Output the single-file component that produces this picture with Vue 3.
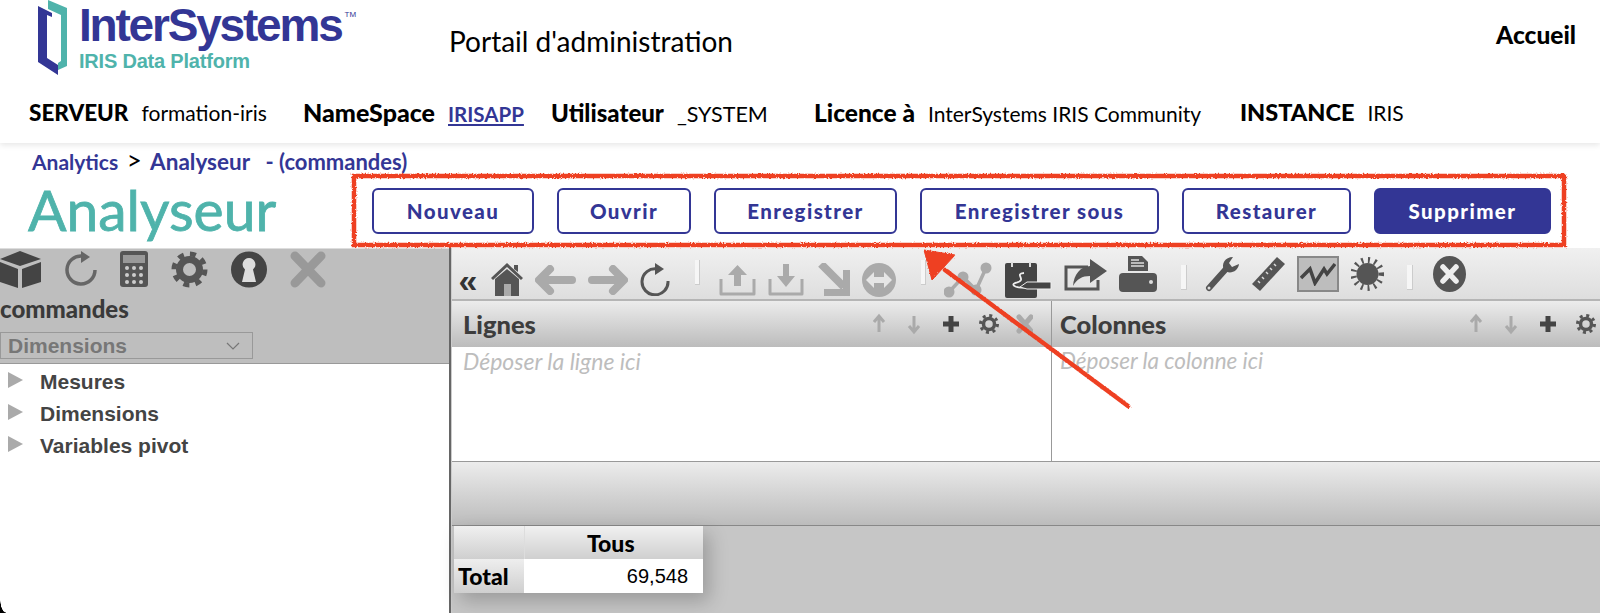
<script setup>
const info = [
  { label: 'SERVEUR', value: 'formation-iris', cls: 'srv' },
  { label: 'NameSpace', value: 'IRISAPP', link: true, cls: 'ns' },
  { label: 'Utilisateur', value: '_SYSTEM', cls: 'usr' },
  { label: 'Licence à', value: 'InterSystems IRIS Community', cls: 'lic' },
  { label: 'INSTANCE', value: 'IRIS', cls: 'inst' }
]
const buttons = [
  { text: 'Nouveau', cls: 'b-new' },
  { text: 'Ouvrir', cls: 'b-open' },
  { text: 'Enregistrer', cls: 'b-save' },
  { text: 'Enregistrer sous', cls: 'b-saveas' },
  { text: 'Restaurer', cls: 'b-restore' },
  { text: 'Supprimer', cls: 'b-delete' }
]
const tree = ['Mesures', 'Dimensions', 'Variables pivot']
</script>

<template>
  <div class="page">
    <header class="top">
      <div class="brand-row">
        <div class="logo">
          <svg width="31" height="76" viewBox="0 0 31 76">
            <path d="M0 6 L14 13 V17 L9 15 V58 L20 65 V75 L0 62 Z" fill="#333695" />
            <path d="M10 0 L29 8 V66 L20 70 V63 L23 61 V15 L10 9 Z" fill="#4fb3ab" />
          </svg>
          <div class="logo-text">
            <div class="logo-name">InterSystems<sup>TM</sup></div>
            <div class="logo-sub">IRIS Data Platform</div>
          </div>
        </div>
        <div class="portal">Portail d'administration</div>
        <a class="home">Accueil</a>
      </div>
      <div class="info-row">
        <div v-for="item in info" :key="item.label" :class="['info', item.cls]">
          <b>{{ item.label }}</b>
          <a v-if="item.link">{{ item.value }}</a>
          <span v-else>{{ item.value }}</span>
        </div>
      </div>
    </header>

    <section class="title-bar">
      <div class="crumbs">
        <b>Analytics</b> <i>&gt;</i> <b class="crumb-page">Analyseur</b> <b class="crumb-end">- (commandes)</b>
      </div>
      <div class="title-row">
        <h1>Analyseur</h1>
        <div class="actions">
          <button v-for="b in buttons" :key="b.text" :class="['btn', b.cls]">{{ b.text }}</button>
        </div>
      </div>
    </section>

    <main class="workspace">
      <aside class="side">
        <div class="side-head">
          <div class="side-tools">
            <svg width="41" height="37" viewBox="0 0 41 37">
              <path d="M20 0 L41 8 L20 15 L0 8 Z" fill="#444" />
              <path d="M0 11 L18 18 V37 L0 31 Z M41 11 L22 18 V37 L41 31 Z" fill="#444" />
            </svg>
            <svg width="33" height="36" viewBox="0 0 33 36" fill="none">
              <path d="M18 5 A14 14 0 1 0 31 19" stroke="#666" stroke-width="3.5" />
              <path d="M17 0 L26 6 L17 12 Z" fill="#666" />
            </svg>
            <svg width="28" height="36" viewBox="0 0 28 36">
              <rect width="28" height="36" rx="3" fill="#555" />
              <rect x="3" y="4" width="22" height="8" fill="#999" />
              <g fill="#ccc">
                <circle cx="7" cy="17" r="2" /><circle cx="14" cy="17" r="2" /><circle cx="21" cy="17" r="2" />
                <circle cx="7" cy="24" r="2" /><circle cx="14" cy="24" r="2" /><circle cx="21" cy="24" r="2" />
                <circle cx="7" cy="31" r="2" /><circle cx="14" cy="31" r="2" /><circle cx="21" cy="31" r="2" />
              </g>
            </svg>
            <svg width="37" height="37" viewBox="0 0 37 37" fill="none">
              <circle cx="18.5" cy="18.5" r="10" stroke="#555" stroke-width="7" />
              <circle cx="18.5" cy="18.5" r="15.500" stroke="#555" stroke-width="5" stroke-dasharray="6 6.170" />
            </svg>
            <svg width="36" height="37" viewBox="0 0 36 37">
              <circle cx="18" cy="18.5" r="18" fill="#444" />
              <path d="M18 7 A6.5 6.5 0 0 1 22 18.5 L25 31 H11 L14 18.5 A6.5 6.5 0 0 1 18 7 Z" fill="#ddd" />
            </svg>
            <svg width="36" height="37" viewBox="0 0 36 37">
              <path d="M5 5 L31 32 M31 5 L5 32" stroke="#999" stroke-width="9" stroke-linecap="round" />
            </svg>
          </div>
          <div class="cube-name">commandes</div>
          <div class="side-select">
            <span>Dimensions</span>
            <svg width="14" height="8" viewBox="0 0 14 8" fill="none"><path d="M1 1 L7 7 L13 1" stroke="#777" stroke-width="1.2" /></svg>
          </div>
        </div>
        <ul class="tree">
          <li v-for="t in tree" :key="t"><i class="tri"></i>{{ t }}</li>
        </ul>
      </aside>

      <div class="pivot">
        <div class="pivot-tools">
          <span class="chev low">«</span>
          <svg class="low" width="32" height="33" viewBox="0 0 32 33">
            <path d="M16 0 L32 15 L30 17 L16 4 L2 17 L0 15 Z M23 2 H27 V9 L23 6 Z" fill="#555" />
            <path d="M4 16 L16 6 L28 16 V33 H4 Z" fill="#555" />
            <rect x="13" y="21" width="7" height="12" fill="#aaa" />
          </svg>
          <svg class="low" width="41" height="30" viewBox="0 0 41 30">
            <path d="M15 4 L4 15 L15 26 M5 15 H37" fill="none" stroke="#aaa" stroke-width="8" stroke-linecap="round" stroke-linejoin="round" />
          </svg>
          <svg class="low" width="40" height="30" viewBox="0 0 40 30">
            <path d="M25 4 L36 15 L25 26 M35 15 H4" fill="none" stroke="#aaa" stroke-width="8" stroke-linecap="round" stroke-linejoin="round" />
          </svg>
          <svg class="low" width="30" height="33" viewBox="0 0 30 33" fill="none">
            <path d="M17 6 A13 13 0 1 0 28 18" stroke="#555" stroke-width="3" />
            <path d="M15 0 L24 6 L15 12 Z" fill="#555" />
          </svg>
          <i class="sep s1"></i>
          <svg class="low" width="37" height="33" viewBox="0 0 37 33" fill="none">
            <path d="M2 16 V31 H35 V16" stroke="#aaa" stroke-width="3" stroke-linejoin="round" />
            <path d="M18.500 2 L28 12 H22 V23 H15 V12 H9 Z" fill="#aaa" />
          </svg>
          <svg class="low" width="36" height="33" viewBox="0 0 36 33" fill="none">
            <path d="M2 16 V31 H34 V16" stroke="#aaa" stroke-width="3" stroke-linejoin="round" />
            <path d="M18 24 L27 13 H21 V1 H15 V13 H9 Z" fill="#aaa" />
          </svg>
          <svg class="low" width="34" height="33" viewBox="0 0 34 33">
            <path d="M5 1 L28 24 M31 7 V30 H8" fill="none" stroke="#aaa" stroke-width="8" />
          </svg>
          <svg class="low" width="34" height="34" viewBox="0 0 34 34">
            <circle cx="17" cy="17" r="17" fill="#aaa" />
            <path d="M12 9 L4 17 L12 25 V20 H22 V25 L30 17 L22 9 V14 H12 Z" fill="#e6e6e6" />
          </svg>
          <i class="sep s2"></i>
          <svg class="low" width="49" height="36" viewBox="0 0 49 36" fill="none">
            <path d="M5 30 L19 15 L32 28 L42 6" stroke="#aaa" stroke-width="3.500" />
            <circle cx="5" cy="30" r="5.500" fill="#aaa" /><circle cx="19" cy="15" r="5.500" fill="#aaa" />
            <circle cx="32" cy="28" r="5.500" fill="#aaa" /><circle cx="42" cy="6" r="5.500" fill="#aaa" />
          </svg>
          <svg class="low" width="47" height="36" viewBox="0 0 47 36" fill="none">
            <rect x="0" y="1" width="32" height="35" rx="2" fill="#444" />
            <path d="M7 0 V5 M25 0 V5" stroke="#ddd" stroke-width="2" />
            <path d="M19 11 C8 12 24 18 10 21 C5 23 12 27 22 25" stroke="#eee" stroke-width="1.800" />
            <path d="M15 25 L22 20 H46 V27 H22 Z" fill="#444" stroke="#eee" stroke-width="1" />
          </svg>
          <svg width="43" height="33" viewBox="0 0 43 33" fill="none">
            <path d="M24 9 H2 V31 H34 V22" stroke="#555" stroke-width="3" />
            <path d="M26 1 L43 13 L26 25 V18 C18 18 13 21 9 28 C10 16 16 9 26 8 Z" fill="#555" />
          </svg>
          <svg width="38" height="36" viewBox="0 0 38 36">
            <path d="M9 0 H23 L29 6 V15 H9 Z" fill="#555" />
            <path d="M12 4 H20 M12 7 H25 M12 10 H25" stroke="#ddd" stroke-width="1.500" />
            <rect y="17" width="38" height="19" rx="4" fill="#555" />
            <circle cx="32" cy="26" r="2" fill="#ddd" />
          </svg>
          <i class="sep s3"></i>
          <svg width="35" height="36" viewBox="0 0 35 36" fill="none">
            <path d="M4 32 L21 13" stroke="#555" stroke-width="6" stroke-linecap="round" />
            <path d="M28 1 C20 1 16 8 19 14 C24 19 33 16 34 8 L27 11 L24 7 Z" fill="#555" />
            <circle cx="4" cy="32" r="1.500" fill="#ddd" />
          </svg>
          <svg width="33" height="36" viewBox="0 0 33 36">
            <path d="M25 1 L33 8 L8 35 L0 28 Z" fill="#555" />
            <path d="M22 8 L24 10 M18 12 L20 14 M14 16 L16 18 M10 21 L12 23 M6 25 L8 27" stroke="#ddd" stroke-width="1.500" />
          </svg>
          <span class="chart-toggle">
            <svg width="36" height="24" viewBox="0 0 36 24" fill="none">
              <path d="M1 16 L10 7 L15 21 L24 7 L27 12 L35 2" stroke="#444" stroke-width="3.500" />
            </svg>
          </span>
          <svg width="33" height="36" viewBox="0 0 33 36" fill="none">
            <circle cx="16.500" cy="18" r="11" fill="#555" />
            <circle cx="16.500" cy="18" r="14" stroke="#555" stroke-width="6" stroke-dasharray="2 4.600" />
          </svg>
          <i class="sep s4"></i>
          <svg width="33" height="36" viewBox="0 0 33 36">
            <ellipse cx="16.500" cy="18" rx="16.500" ry="18" fill="#555" />
            <path d="M10 11 L23 25 M23 11 L10 25" stroke="#eee" stroke-width="5.500" stroke-linecap="round" />
          </svg>
        </div>

        <div class="drops">
          <div class="drop lines">
            <div class="drop-head">
              <h3>Lignes</h3>
              <svg class="mini" width="160" height="22" viewBox="0 0 160 22">
                <use href="#pv-tools" />
              </svg>
            </div>
            <div class="drop-body">Déposer la ligne ici</div>
          </div>
          <div class="drop cols">
            <div class="drop-head">
              <h3>Colonnes</h3>
              <svg class="mini" width="160" height="22" viewBox="0 0 160 22">
                <use href="#pv-tools" />
              </svg>
            </div>
            <div class="drop-body">Déposer la colonne ici</div>
          </div>
        </div>
        <div class="band"></div>
        <div class="results">
          <table class="grid">
            <tbody>
              <tr><th class="corner"></th><th class="col">Tous</th></tr>
              <tr><th class="rowh">Total</th><td>69,548</td></tr>
            </tbody>
          </table>
        </div>
      </div>
    </main>

    <svg class="defs" width="0" height="0">
      <defs>
        <g id="pv-tools">
          <path d="M6 19 V4 M1 9 L6 3 L11 9" fill="none" stroke="#aaa" stroke-width="3" />
          <path d="M41 3 V18 M36 13 L41 19 L46 13" fill="none" stroke="#aaa" stroke-width="3" />
          <path d="M78 3 V19 M70 11 H86" fill="none" stroke="#444" stroke-width="5" />
          <circle cx="116" cy="11" r="5.500" fill="none" stroke="#555" stroke-width="3.500" />
          <circle cx="116" cy="11" r="8.500" fill="none" stroke="#555" stroke-width="3" stroke-dasharray="3 3.670" />
          <path d="M146 4 L158 18 M158 4 L146 18" fill="none" stroke="#aaa" stroke-width="5" stroke-linecap="round" />
        </g>
      </defs>
    </svg>

    <!-- annotation drawn over the screenshot -->
    <svg class="markup" width="1600" height="613" viewBox="0 0 1600 613">
      <defs>
        <filter id="rough" x="-2%" y="-2%" width="104%" height="104%">
          <feTurbulence type="fractalNoise" baseFrequency="0.6" numOctaves="2" seed="3" />
          <feDisplacementMap in="SourceGraphic" scale="3" />
        </filter>
      </defs>
      <g filter="url(#rough)" fill="none" stroke="#ee3f23">
        <rect x="354" y="176" width="1210" height="69" stroke-width="4.500" />
        <path d="M1128 406 L945 270" stroke-width="4.500" stroke-linecap="round" />
        <path d="M924 250 L955 255 L932 280 Z" fill="#ee3f23" stroke-width="1" />
      </g>
    </svg>
    <i class="corner-mask"></i>
  </div>
</template>

<style scoped>
.page {
  position: relative;
  width: 1600px;
  height: 613px;
  overflow: hidden;
  background: #fff;
  font-family: Lato, "Open Sans", sans-serif;
  color: #000;
}
.top {
  height: 143px;
  box-sizing: border-box;
  position: relative;
  box-shadow: 0 2px 6px rgba(0,0,0,0.1);
}
.brand-row {
  display: flex;
  align-items: flex-start;
  height: 95px;
}
.logo {
  display: flex;
  width: 449px;
  padding-left: 38px;
  box-sizing: border-box;
  flex: none;
}
.logo-text { margin-left: 10px; }
.logo-name {
  font-family: "Liberation Sans", sans-serif;
  font-size: 46px;
  line-height: 40px;
  margin-top: 5px;
  font-weight: 700;
  color: #333695;
  letter-spacing: -2.200px;
  white-space: nowrap;
}
.logo-name sup {
  font-size: 8px;
  font-weight: 400;
  letter-spacing: 0;
  vertical-align: 24px;
  line-height: 0;
  margin-left: 3px;
}
.logo-sub {
  font-family: "Liberation Sans", sans-serif;
  font-size: 20px;
  font-weight: 700;
  line-height: 20px;
  margin-top: 6px;
  color: #4fb3ab;
  white-space: nowrap;
  letter-spacing: -0.2px;
}
.portal {
  margin-top: 24px;
  font-size: 28px;
  line-height: 34px;
  white-space: nowrap;
}
.home {
  margin-left: auto;
  margin-right: 24px;
  margin-top: 20px;
  font-size: 24.500px;
  line-height: 30px;
  font-weight: 900;
}
.info-row {
  display: flex;
  padding-left: 29px;
  height: 34px;
  align-items: center;
}
.info {
  display: flex;
  gap: 13px;
  align-items: baseline;
  white-space: nowrap;
  font-size: 21px;
}
.info b { font-weight: 900; font-size: 24px; }
.srv b { font-size: 22.500px; }
.ns b { font-size: 25px; }
.lic b { font-size: 24.500px; }
.inst b { font-size: 23.500px; }
.usr span { font-size: 21.500px; }
.info a {
  color: #333695;
  text-decoration: underline;
  font-weight: 700;
  font-size: 20.500px;
}
.srv { width: 274px; }
.ns { width: 248px; }
.usr { width: 263px; }
.lic { width: 426px; }

.title-bar { height: 105px; position: relative; }
.crumbs {
  padding: 6px 0 0 32px;
  height: 37px;
  box-sizing: border-box;
  font-size: 21px;
  line-height: 22px;
  color: #333695;
  white-space: nowrap;
}
.crumbs b { font-weight: 700; }
.crumbs i { font-style: normal; color: #000; font-size: 26px; margin: 0 3px; }
.crumb-page { font-size: 22.500px; }
.crumb-end { margin-left: 10px; font-size: 22px; }
.title-row { display: flex; align-items: flex-start; }
h1 {
  margin: -4px 0 0;
  width: 372px;
  padding-left: 28px;
  box-sizing: border-box;
  font-size: 57px;
  line-height: 66px;
  font-weight: 400;
  color: #4fb3ab;
  -webkit-text-stroke: 0.8px #4fb3ab;
  white-space: nowrap;
  flex: none;
}
.actions { display: flex; gap: 23px; margin-top: 8px; }
.btn {
  height: 46px;
  box-sizing: border-box;
  background: #fff;
  border: 2.500px solid #333695;
  border-radius: 6px;
  color: #333695;
  font-family: Lato, sans-serif;
  font-size: 20.500px;
  font-weight: 900;
  letter-spacing: 1.400px;
  padding: 0;
}
.b-new { width: 162px; }
.b-open { width: 134px; }
.b-save { width: 183px; }
.b-saveas { width: 239px; }
.b-restore { width: 169px; }
.b-delete { width: 177px; background: #333695; color: #fff; }

.workspace {
  display: grid;
  grid-template-columns: 451px 1fr;
  height: 365px;
  position: relative;
}
.side {
  border-right: 2px solid #666;
  background: #fff;
}
.side-head {
  height: 116px;
  background: #bebebe;
  border-bottom: 1px solid #999;
  border-top: 1px solid #ddd;
  box-sizing: border-box;
}
.side-tools {
  display: flex;
  gap: 23px;
  height: 39px;
  padding-top: 1px;
  box-sizing: border-box;
  align-items: center;
}
.cube-name {
  font-size: 24px;
  font-weight: 900;
  color: #3a3a3a;
  line-height: 26px;
  margin-top: 8px;
}
.side-select {
  margin-top: 10px;
  width: 253px;
  height: 27px;
  box-sizing: border-box;
  border: 1px solid #999;
  padding: 0 12px 0 7px;
  display: flex;
  align-items: center;
  justify-content: space-between;
  font-family: "Liberation Sans", sans-serif;
  font-weight: 700;
  font-size: 21px;
  color: #777;
}
.tree {
  list-style: none;
  margin: 0;
  padding: 2px 0 0 8px;
  font-family: "Liberation Sans", sans-serif;
  font-weight: 700;
  font-size: 21px;
  color: #444;
}
.tree li { display: flex; align-items: center; height: 32px; }
.tri {
  width: 0;
  height: 0;
  border-left: 15px solid #aaa;
  border-top: 8px solid transparent;
  border-bottom: 8px solid transparent;
  margin: 0 17px 0 0;
  position: relative;
  top: -2px;
}

.pivot {
  display: flex;
  flex-direction: column;
  min-width: 0;
  border-left: 1px solid #ccc;
}
.pivot-tools {
  height: 53px;
  box-sizing: border-box;
  background: linear-gradient(#f0f0f0, #dedede);
  border-bottom: 2px solid #b5b5b5;
  display: flex;
  align-items: center;
  gap: 12px;
  padding: 1px 0 0 5px;
  flex: none;
}
.low { margin-top: 11px; }
.chev {
  width: 22px;
  font-family: "Liberation Sans", sans-serif;
  font-weight: 700;
  font-size: 34px;
  line-height: 30px;
  color: #333;
  text-align: center;
}
.sep {
  width: 5px;
  height: 25px;
  background: #f6f6f6;
  border-right: 1px solid #ccc;
  border-bottom: 1px solid #ccc;
  box-sizing: border-box;
  align-self: flex-start;
}
.s1 { margin: 11px 7px 0 13px; }
.s2 { margin: 11px 6px 0 13px; }
.s3 { margin: 16px 6px 0 12px; width: 6px; }
.s4 { margin: 16px 8px 0 11px; width: 6px; }
.chart-toggle {
  width: 42px;
  height: 36px;
  box-sizing: border-box;
  background: #bdbdbd;
  border: 2px solid #888;
  display: flex;
  align-items: center;
  justify-content: center;
}
.drops { display: flex; height: 160px; flex: none; }
.drop { display: flex; flex-direction: column; box-sizing: border-box; }
.lines { width: 600px; border-right: 1px solid #999; }
.cols { flex: 1; min-width: 0; overflow: hidden; }
.drop-head {
  height: 46px;
  flex: none;
  display: flex;
  align-items: center;
  background: linear-gradient(#ececec, #bcbcbc);
  white-space: nowrap;
}
h3 {
  margin: 0;
  font-size: 25.500px;
  font-weight: 900;
  color: #3d3d3d;
  padding-left: 11px;
  width: 421px;
  box-sizing: border-box;
  flex: none;
}
.cols h3 { padding-left: 8px; width: 418px; }
.mini { flex: none; }
.drop-body {
  flex: 1;
  background: #fff;
  font-style: italic;
  font-size: 23px;
  color: #bdbdbd;
  padding: 2px 0 0 11px;
  line-height: 24px;
}
.cols .drop-body { padding-left: 8px; font-size: 22.500px; }
.band {
  height: 65px;
  flex: none;
  box-sizing: border-box;
  background: linear-gradient(#ececec, #bcbcbc);
  border-top: 1px solid #999;
  border-bottom: 1px solid #888;
}
.results { flex: 1; background: #c6c6c6; }
.grid {
  border-collapse: collapse;
  box-shadow: 6px 8px 18px rgba(0,0,0,0.22);
  margin-left: 2px;
  font-size: 20px;
}
.grid th, .grid td { padding: 0; box-sizing: border-box; }
.corner { width: 70px; height: 33px; background: linear-gradient(#f0f0f0, #cfcfcf); }
.grid .col {
  width: 179px;
  background: linear-gradient(#f0f0f0, #cfcfcf);
  border-left: 1px solid #ddd;
  font-weight: 900;
  font-size: 23px;
  padding-right: 6px;
}
.rowh {
  height: 34px;
  background: linear-gradient(#eee, #cfcfcf);
  text-align: left;
  font-weight: 900;
  font-size: 23px;
}
.grid .rowh { padding-left: 4px; }
.grid td {
  background: #fff;
  text-align: right;
  padding-right: 15px;
  font-size: 20px;
  font-family: "Liberation Sans", sans-serif;
}
.defs { position: absolute; }
.markup { position: absolute; left: 0; top: 0; pointer-events: none; }
.corner-mask {
  position: absolute;
  left: 0;
  bottom: 0;
  width: 6px;
  height: 14px;
  background: radial-gradient(ellipse 6px 14px at 100% 0, transparent 92%, #000 100%);
}
</style>

<style>
html, body { margin: 0; background: #fff; }
</style>
